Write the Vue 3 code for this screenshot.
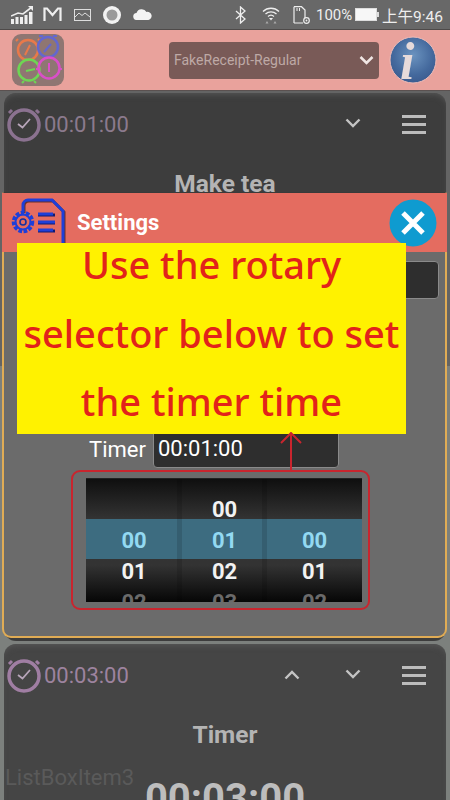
<script setup>
const cards = [
  { time: '00:01:00', title: 'Make tea', big: '00:01:00', up: false, cls: 'first' },
  { time: '00:02:00', title: 'Rest', big: '00:02:00', up: true, cls: 'middle' },
  { time: '00:03:00', title: 'Timer', big: '00:03:00', up: true, cls: 'last' },
]
const columns = [
  ['', '00', '01', '02'],
  ['00', '01', '02', '03'],
  ['', '00', '01', '02'],
]
</script>

<template>
  <div class="app">
    <div class="status">
      <svg class="s-signal" width="22" height="18" viewBox="0 0 22 18">
        <path d="M0 10 L7 7 L12 8 L21 1" fill="none" stroke="#eee" stroke-width="1.600"/>
        <path d="M17 0h5v5z" fill="#eee"/>
        <rect x="0" y="13" width="3" height="5" fill="#eee"/>
        <rect x="4.500" y="11" width="3" height="7" fill="#eee"/>
        <rect x="9" y="11" width="3" height="7" fill="#eee"/>
        <rect x="13.500" y="9" width="3" height="9" fill="#eee"/>
        <rect x="18" y="6" width="3.500" height="12" fill="#eee"/>
      </svg>
      <svg class="s-m" width="19" height="15" viewBox="0 0 19 15">
        <path d="M1.500 14V1.500h2.500L9.500 8 15 1.500h2.500V14" fill="none" stroke="#eee" stroke-width="2.200"/>
      </svg>
      <svg class="s-img" width="17" height="12" viewBox="0 0 17 12">
        <rect x=".5" y=".5" width="16" height="11" fill="none" stroke="#ddd"/>
        <path d="M1 8 L5 4 L8 6.500 L11 4 L16 8" fill="none" stroke="#ddd"/>
      </svg>
      <svg class="s-circle" width="18" height="18" viewBox="0 0 18 18">
        <circle cx="9" cy="9" r="9" fill="#f2f2f2"/>
        <circle cx="9" cy="9" r="5.500" fill="#9a9a9a"/>
      </svg>
      <svg class="s-cloud" width="19" height="11" viewBox="0 0 19 11">
        <path d="M4 11a3.500 3.500 0 0 1-.5-7A5.500 5.500 0 0 1 13.500 3 4 4 0 0 1 15.500 11z" fill="#f4f4f4"/>
      </svg>
      <svg class="s-bt" width="11" height="18" viewBox="0 0 11 18">
        <path d="M1 5 L10 13 L5.500 17 V1 L10 5 L1 13" fill="none" stroke="#eee" stroke-width="1.300"/>
      </svg>
      <svg class="s-wifi" width="18" height="18" viewBox="0 0 18 18">
        <path d="M1 5.500a11.500 11.500 0 0 1 16 0M3.500 8a8 8 0 0 1 11 0M6 10.500a4.500 4.500 0 0 1 6 0" fill="none" stroke="#eee" stroke-width="1.300"/>
        <path d="M7 12h4l-2 2.500z" fill="#eee"/>
        <path d="M5 15l1.500 2.500h-3zM13 15l1.500 2.500h-3z" fill="#aaa"/>
      </svg>
      <svg class="s-sd" width="17" height="18" viewBox="0 0 17 18">
        <path d="M1 .7h7.500L12 4v8M10 17H1z" fill="none" stroke="#eee" stroke-width="1.200"/>
        <path d="M1 .7V17" stroke="#eee" stroke-width="1.200"/>
        <path d="M4 2v3M6.500 2v3" stroke="#eee"/>
        <circle cx="13.500" cy="14.500" r="2.800" fill="none" stroke="#eee" stroke-width="1.200"/>
        <circle cx="13.500" cy="14.500" r=".9" fill="#eee"/>
      </svg>
      <span class="s-pct">100%</span>
      <span class="s-batt"><i></i></span>
      <span class="s-time">上午9:46</span>
    </div>

    <div class="head">
      <div class="logo">
        <svg width="52" height="52" viewBox="0 0 52 52">
          <g fill="none" stroke-width="2.500">
            <g stroke="#e8794a">
              <circle cx="16" cy="16" r="10"/><path d="M6 5l-2 2M26 5l2 2M13 21l5-10" stroke-width="2"/>
            </g>
            <g stroke="#6367cf">
              <circle cx="36" cy="13" r="10"/><path d="M27 2h4M41 2h4M32 18l7-8" stroke-width="2"/>
            </g>
            <g stroke="#6ed653">
              <circle cx="17" cy="36" r="10.500"/><path d="M10 49l2-2M24 49l-2-2M14 37l9-2" stroke-width="2"/>
            </g>
            <g stroke="#da4fc8">
              <circle cx="37" cy="34" r="10.500"/><path d="M26 35h-2M48 35h2M37 29v9" stroke-width="2"/>
            </g>
          </g>
        </svg>
      </div>
      <div class="select">
        <span>FakeReceipt-Regular</span>
        <svg width="15" height="10" viewBox="0 0 15 10">
          <path d="M1.500 2 L7.500 8 L13.500 2" fill="none" stroke="#f0e6e4" stroke-width="2.500"/>
        </svg>
      </div>
      <svg class="info" width="48" height="48" viewBox="0 0 48 48">
        <defs>
          <radialGradient id="ig" cx="50%" cy="40%" r="60%">
            <stop offset="0" stop-color="#6b93bf"/>
            <stop offset=".7" stop-color="#44699d"/>
            <stop offset="1" stop-color="#3c5c90"/>
          </radialGradient>
        </defs>
        <circle cx="24" cy="24" r="23" fill="url(#ig)" stroke="#eebcb8" stroke-width="1"/>
        <text x="11" y="43" class="info-i">i</text>
      </svg>
    </div>

    <div class="list">
      <section v-for="c in cards" :key="c.title" class="card" :class="c.cls">
        <div class="card-top">
          <svg class="clock" width="36" height="36" viewBox="0 0 36 36">
            <path d="M3 7l3-3M33 7l-3-3" stroke="currentColor" stroke-width="3"/>
            <circle cx="18" cy="19" r="15" fill="none" stroke="currentColor" stroke-width="3.500"/>
            <path d="M12 18l4.500 3.500L24 13" fill="none" stroke="#b8a6ba" stroke-width="1.800"/>
          </svg>
          <span class="card-time">{{ c.time }}</span>
          <svg v-if="c.up" class="chev up" width="16" height="10" viewBox="0 0 16 10">
            <path d="M1.500 8.500L8 2l6.500 6.500" fill="none" stroke="#c4c4c4" stroke-width="2.400"/>
          </svg>
          <svg class="chev down" width="16" height="10" viewBox="0 0 16 10">
            <path d="M1.500 1.500L8 8l6.500-6.500" fill="none" stroke="#c4c4c4" stroke-width="2.400"/>
          </svg>
          <div class="burger"><i></i><i></i><i></i></div>
        </div>
        <div class="card-title">{{ c.title }}</div>
        <div class="card-big">{{ c.big }}</div>
      </section>
      <span class="item-label">ListBoxItem3</span>
    </div>

    <div class="dialog">
      <div class="d-head">
        <svg class="d-icon" width="60" height="60" viewBox="0 0 60 60">
          <path d="M13 14V7a5 5 0 0 1 5-5h24l11 11v36a6 6 0 0 1-6 6H18" fill="none" stroke="#000" stroke-opacity=".55" stroke-width="3" transform="translate(1 1)"/>
          <path d="M13 14V7a5 5 0 0 1 5-5h24l11 11v36a6 6 0 0 1-6 6H18" fill="none" stroke="#1e3fd8" stroke-width="3"/>
          <g stroke-width="3">
            <path d="M28 17h17M28 25h17M28 33h17" stroke="#101a70"/>
            <path d="M28 16h15M28 24h17M28 32h15" stroke="#1e3fd8"/>
          </g>
          <circle cx="13" cy="24" r="9" fill="none" stroke="#1e3fd8" stroke-width="4.500" stroke-dasharray="3.500 1.500"/>
          <circle cx="13" cy="24" r="7.500" fill="none" stroke="#1e3fd8" stroke-width="2"/>
          <circle cx="13" cy="24" r="3" fill="none" stroke="#16309f" stroke-width="1.600"/>
        </svg>
        <span class="d-title">Settings</span>
        <div class="d-close">
          <svg width="48" height="48" viewBox="0 0 48 48">
            <circle cx="24" cy="24" r="23.500" fill="#0f9bd0"/>
            <path d="M14 14L34 34M34 14L14 34" stroke="#fff" stroke-width="5"/>
          </svg>
        </div>
      </div>
      <div class="d-body">
        <div class="field-top"></div>
        <div class="timer-row">
          <span class="timer-label">Timer</span>
          <div class="timer-input">00:01:00</div>
        </div>
        <div class="picker">
          <div class="band"></div>
          <div v-for="(col, i) in columns" :key="i" class="col">
            <div v-for="(v, j) in col" :key="j" class="cell" :class="{ sel: j === 1, fade: j === 3 }">{{ v }}</div>
          </div>
        </div>
      </div>
    </div>

    <div class="hint">
      <div class="hint-text">Use the rotary<br>selector below to set<br>the timer time</div>
    </div>
    <svg class="arrow" width="24" height="40" viewBox="0 0 24 40">
      <path d="M12 1V39M2 11L12 1L22 11" fill="none" stroke="#c9252e" stroke-width="2"/>
    </svg>
    <div class="ring"></div>
  </div>
</template>

<style>
body { margin: 0; background: #6a6a6a; }
</style>

<style scoped>
.app {
  position: relative;
  width: 450px;
  height: 800px;
  overflow: hidden;
  font-family: Roboto, "Noto Sans CJK SC", sans-serif;
}
.status {
  display: flex;
  align-items: center;
  height: 29px;
  padding: 0 10px 0 11px;
  background: #686868;
  border-bottom: 1px solid #4e4a49;
  color: #eee;
}
.s-m { margin-left: 10px; }
.s-img { margin-left: 12px; }
.s-circle { margin-left: 12px; }
.s-cloud { margin-left: 12px; }
.s-bt { margin-left: auto; }
.s-wifi { margin-left: 16px; }
.s-sd { margin-left: 13px; }
.s-pct { margin-left: 6px; font-size: 15px; width: 35px; white-space: nowrap; }
.s-batt {
  margin-left: 4px;
  width: 22px;
  height: 13px;
  background: #f7f7f7;
  position: relative;
  border: 1px solid #ddd;
  box-sizing: border-box;
}
.s-batt i {
  position: absolute;
  right: -3px;
  top: 3px;
  width: 2px;
  height: 5px;
  background: #ddd;
}
.s-time { margin-left: 5px; font-size: 15.500px; white-space: nowrap; width: 58px; }

.head {
  display: flex;
  align-items: center;
  height: 60px;
  padding: 0 13px 0 12px;
  background: #e9a29c;
  border-bottom: 1px solid #5b5150;
}
.logo {
  width: 52px;
  height: 52px;
  border-radius: 9px;
  background: #8f7672;
}
.logo svg { display: block; }
.select {
  display: flex;
  align-items: center;
  justify-content: space-between;
  width: 210px;
  height: 37px;
  margin-left: 105px;
  padding: 0 5px;
  box-sizing: border-box;
  background: #795a57;
  border-radius: 4px;
  color: #bea9a6;
  font-size: 14px;
}
.info { margin-left: 10px; }
.info-i {
  font-family: "Liberation Serif", serif;
  font-style: italic;
  font-weight: 700;
  font-size: 52px;
  fill: #e6dada;
}

.list {
  position: relative;
  display: flex;
  flex-direction: column;
  gap: 3.500px;
  padding: 2px 4px 0;
  background: linear-gradient(#646464 275px, #7c807d 275px);
  height: 709px;
  box-sizing: border-box;
}
.card {
  flex: none;
  height: 272px;
  border-radius: 12px;
  box-sizing: border-box;
  padding: 13px 2px 0;
  background: #3d3d3d;
  box-shadow: inset 0 4px 6px -3px #5a5a5a;
}
.card.last { background: #454545; }
.card-top {
  display: flex;
  align-items: center;
  height: 36px;
  color: #8b7290;
}
.last .card-top { color: #a07ea3; }
.clock { flex: none; }
.card-time {
  margin-left: 2px;
  font-size: 22px;
  color: #8b7a8d;
  width: 240px;
  white-space: nowrap;
}
.last .card-time { color: #9d839f; }
.chev { flex: none; }
.chev.down { position: absolute; left: 345px; margin-top: -2px; }
.burger {
  position: absolute;
  left: 402px;
  width: 24px;
  display: flex;
  flex-direction: column;
  gap: 5px;
}
.burger i { display: block; height: 3px; background: #bcbcbc; }
.card-title {
  margin-top: 27px;
  text-align: center;
  font-size: 24.500px;
  line-height: 30px;
  font-weight: 700;
  color: #b4b4b4;
}
.card-big {
  margin-top: 24px;
  text-align: center;
  font-size: 40px;
  line-height: 50px;
  font-weight: 700;
  color: #bdbdbd;
}
.item-label {
  position: absolute;
  left: 5px;
  top: 673px;
  font-size: 22px;
  line-height: 28px;
  color: #5a5a5a;
  white-space: nowrap;
}

.dialog {
  position: absolute;
  left: 2px;
  top: 192px;
  width: 445px;
  height: 446px;
  box-sizing: border-box;
  display: flex;
  flex-direction: column;
  background: #6b6b6b;
  border: 2px solid #e0ac55;
  border-top: 1px solid #3a3a3a;
  border-radius: 2px 2px 9px 9px;
}
.d-head {
  position: relative;
  flex: none;
  display: flex;
  align-items: center;
  height: 59px;
  margin: 0 -2px;
  background: #e46c60;
}
.d-icon {
  position: absolute;
  left: 8px;
  top: 5px;
}
.d-title {
  margin-left: 75px;
  font-size: 22px;
  font-weight: 700;
  color: #fff;
}
.d-close {
  position: absolute;
  left: 387px;
  top: 6px;
  width: 48px;
  height: 48px;
}
.d-close svg { display: block; }
.d-body {
  flex: 1;
  padding-top: 9px;
}
.field-top {
  width: 300px;
  height: 38px;
  margin-left: 135px;
  box-sizing: border-box;
  background: #2e2e2e;
  border: 1px solid #8a8a8a;
  border-radius: 4px;
}
.timer-row {
  display: flex;
  align-items: center;
  margin-top: 131px;
  padding-left: 85px;
  height: 38px;
}
.timer-label {
  width: 64px;
  font-size: 22px;
  color: #fff;
}
.timer-input {
  width: 186px;
  height: 38px;
  box-sizing: border-box;
  padding-left: 4px;
  background: #2e2e2e;
  border: 1px solid #8a8a8a;
  border-radius: 4px;
  color: #fff;
  font-size: 22px;
  line-height: 36px;
}
.picker {
  position: relative;
  display: flex;
  width: 276px;
  height: 124px;
  margin: 10px 0 0 82px;
  overflow: hidden;
  box-sizing: border-box;
  background: linear-gradient(#0f0f0f 0, #343434 33%, #333 70%, #060606 100%);
  border-top: 1px solid #222;
}
.band {
  position: absolute;
  left: 0;
  right: 0;
  top: 40px;
  height: 40px;
  background: #3d6c80;
}
.col {
  position: relative;
  padding-top: 15px;
  text-align: center;
  width: 96px;
  flex: none;
}
.col:nth-child(3) { width: 85px; }
.col:nth-child(4) { width: 95px; }
.col:nth-child(2)::after,
.col:nth-child(3)::after {
  content: "";
  position: absolute;
  top: 0;
  bottom: 0;
  right: 0;
  width: 5px;
  background: rgba(0, 0, 0, .12);
}
.cell {
  height: 31px;
  line-height: 31px;
  font-size: 22px;
  font-weight: 700;
  color: #f2f2f2;
}
.cell.sel { color: #93d9f2; }
.cell.fade { color: #6a6a6a; }

.hint {
  position: absolute;
  left: 17px;
  top: 243px;
  width: 389px;
  height: 191px;
  background: #fff200;
}
.hint-text {
  margin-top: -13px;
  text-align: center;
  font-family: "Noto Sans", sans-serif;
  font-size: 38px;
  font-weight: 500;
  line-height: 68.500px;
  color: #e2231a;
  white-space: nowrap;
}
.arrow {
  position: absolute;
  left: 279px;
  top: 432px;
}
.ring {
  position: absolute;
  left: 71px;
  top: 470px;
  width: 299px;
  height: 140px;
  box-sizing: border-box;
  border: 2px solid #c9252e;
  border-radius: 9px;
}
</style>
